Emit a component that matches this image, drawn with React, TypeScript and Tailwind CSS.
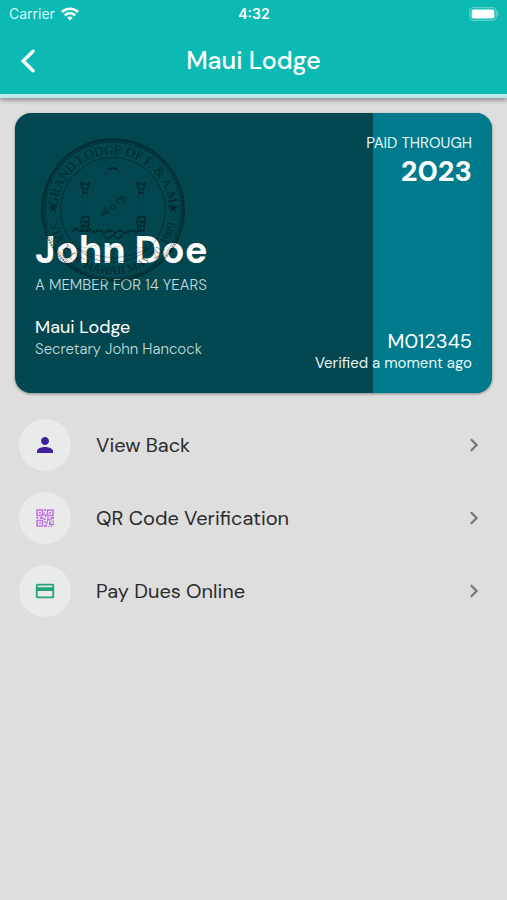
import { MdCreditCard, MdPerson } from "react-icons/md";
import type { ReactNode } from "react";

function StatusBar() {
  return (
    <div className="grid h-7 grid-cols-3 items-center pr-2 pl-[9px] font-[Inter,sans-serif] text-sm leading-5">
      <div className="flex items-center gap-1.5">
        <span className="text-[#d5f6f3]">Carrier</span>
        <svg viewBox="0 0 18 14" className="h-3.5 w-[18px]" fill="none" stroke="white" strokeWidth="2.5" aria-label="Wi-Fi">
          <path d="M.9 5a11.6 11.6 0 0 1 16.2 0" />
          <path d="M3.8 8.3a7.4 7.4 0 0 1 10.4 0" />
          <path d="M6.2 10.8a4 4 0 0 1 5.6 0L9 13.6z" fill="white" stroke="none" />
        </svg>
      </div>
      <span className="text-center font-semibold">4:32</span>
      <svg viewBox="0 0 30 14" className="h-3.5 w-[30px] justify-self-end" aria-label="Battery full">
        <rect x=".7" y=".7" width="26.6" height="12.6" rx="3.8" fill="none" stroke="#5fd2cc" strokeWidth="1.3" />
        <rect x="2.6" y="2.6" width="22.8" height="8.8" rx="2" fill="white" />
        <path d="M28.4 4.8c1.6.6 1.6 3.8 0 4.4z" fill="#6fd9d3" />
      </svg>
    </div>
  );
}

function Header() {
  return (
    <header className="relative border-b-4 border-[#b9e8e7] bg-[#0cbab3] text-white shadow-[0_2px_5px_rgba(0,0,0,0.4)]">
      <StatusBar />
      <div className="grid h-[66px] grid-cols-[56px_1fr_56px] items-center">
        <button type="button" aria-label="Back" className="flex h-12 items-center pl-5">
          <svg viewBox="0 0 16 26" className="h-6 w-4" fill="none" stroke="white" strokeWidth="3.6" strokeLinecap="round">
            <path d="M13.500 2.500 2.800 13l10.700 10.500" />
          </svg>
        </button>
        <h1 className="text-center text-[25px] leading-8 font-medium">Maui Lodge</h1>
      </div>
    </header>
  );
}

function Star({ x }: { x: number }) {
  return (
    <path
      transform={`translate(${x} 70)`}
      d="M0-5 1.2-1.6H5L2 .6 3.1 4.2 0 2-3.1 4.2-2 .6-5-1.6H-1.2z"
      fill="currentColor"
      stroke="none"
    />
  );
}

function Pillar({ x }: { x: number }) {
  return (
    <g transform={`translate(${x} 0)`}>
      <path d="M-3 55v25M3 55v25" strokeWidth=".7" opacity=".35" />
      <path d="M-4.500 44l1 5 2 2h3l2-2 1-5-2.500 3-2-2-2 2z" strokeWidth="1.200" />
      <path d="M-2 51v4h4v-4M-3 55h6" />
      <path d="M-3 79h6l1 3-1 11h-6l-1-11zM-3 84h6M-3 88h6" strokeWidth="1.300" />
      <path d="M-2 80l4 4-4 4 4 4" strokeWidth=".8" />
    </g>
  );
}

function Seal() {
  return (
    <svg
      viewBox="0 0 144 144"
      className="pointer-events-none absolute top-[25px] left-[26px] size-36 text-black opacity-45"
      fill="none"
      stroke="currentColor"
      aria-label="Lodge seal"
    >
      <defs>
        <path id="seal-top" d="M16 72a56 56 0 0 1 112 0" />
        <path id="seal-bottom" d="M7.500 72a64.500 64.500 0 0 0 129 0" />
      </defs>
      <circle cx="72" cy="72" r="70.500" strokeWidth="2.600" strokeDasharray="2 .7" />
      <circle cx="72" cy="72" r="68" strokeWidth=".7" />
      <circle cx="72" cy="72" r="52.500" strokeWidth=".8" />
      <g fill="currentColor" stroke="none" fontFamily="Liberation Serif, serif" fontSize="13">
        <text>
          <textPath href="#seal-top" startOffset="50%" textAnchor="middle">GRAND LODGE OF F. &amp; A.M.</textPath>
        </text>
        <text fontSize="12">
          <textPath href="#seal-bottom" startOffset="50%" textAnchor="middle">STATE OF HAWAII MAY 20, 1989</textPath>
        </text>
      </g>
      <Star x={12} />
      <Star x={132} />
      <Pillar x={44} />
      <Pillar x={100} />
      <path d="M67 32q5-4 10 0" strokeWidth="1.800" />
      <path d="M62 35h6M77 35h6M69 35l2-2" strokeWidth=".7" opacity=".4" />
      <g strokeWidth="1">
        <path d="M61 77l4-8 3 6zM63 75l3-2" />
        <circle cx="72" cy="69" r="2.300" />
        <path d="M75 62l3 5M79 58l5 2-1 4M77 62l4-2" />
      </g>
      <path d="M32 93l3-3 3 3h4M48 91l5 3 5-2 5 3 6-3 5 3 5-3 5 3 6-3 5 2 5-2" strokeWidth="2.200" strokeDasharray="3 1" />
      <path d="M62 97l5 4 5-4 5 4 5-4" strokeWidth="1.200" />
      <path d="M36 110q14 8 36 10 22-2 36-10" strokeWidth=".7" />
      <path d="M34 108l12 2 11-4 15 4 15-4 11 4 12-2" strokeWidth=".6" opacity=".7" />
    </svg>
  );
}

function MembershipCard() {
  return (
    <section className="relative grid h-[280px] grid-cols-[3fr_1fr] overflow-hidden rounded-2xl bg-[#034750] shadow-[0_1px_3px_rgba(0,0,0,0.4)]">
      <div className="col-start-2 row-start-1 bg-[#007b8d]" />
      <div className="col-span-2 col-start-1 row-start-1 flex justify-between px-5 py-5 text-white">
        <div className="flex flex-col justify-end pb-3.5">
          <h2 className="text-[38px] leading-12 font-bold">John Doe</h2>
          <p className="mt-px text-[15px] leading-5 font-light text-[#c0dadd]">A MEMBER FOR 14 YEARS</p>
          <p className="mt-5 text-lg leading-6">Maui Lodge</p>
          <p className="text-[15px] leading-5 font-light text-[#c0dadd]">Secretary John Hancock</p>
        </div>
        <div className="flex flex-col justify-between text-right">
          <div>
            <p className="text-[15px] leading-5 text-[#e4f6f8]">PAID THROUGH</p>
            <p className="text-[29px] leading-9 font-bold">2023</p>
          </div>
          <div>
            <p className="text-xl leading-6">M012345</p>
            <p className="text-[15px] leading-5 text-[#e4f6f8]">Verified a moment ago</p>
          </div>
        </div>
      </div>
      <Seal />
    </section>
  );
}

function QrIcon() {
  return (
    <svg viewBox="0 0 18 18" className="size-[18px]" fill="none" stroke="#c374e2" strokeWidth="1.6" aria-hidden="true">
      <path d="M1 1h5.500v5.500H1zM11.500 1H17v5.500h-5.500zM1 11.500h5.500V17H1z" />
      <path
        fill="#c374e2"
        stroke="none"
        d="M3 3h1.8v1.8H3zM13.3 3h1.8v1.8h-1.8zM3 13.3h1.8v1.8H3zM8 0h2v2H8zM7.6 3.5h1.3v3H7.6zM9 5.5h1.5v2.6H9zM0 8h2.5v1.5H0zM4 8h3v2H4zM7.5 9h2v2h-2zM11 8h2v1.5h-2zM14.5 8H18v2h-2v1.5h-1.5zM11 10h3v1.5h-2v2h-1zM8 12h2v1.5H8zM9.5 13.5h2v2h-2zM8 16h3v2H8zM13 12.5h2v2h3V16h-2v2h-1.5v-2H13zM16.5 11.5H18v2h-1.5zM12 17h1.5v1H12z"
      />
    </svg>
  );
}

function MenuRow({ icon, label }: { icon: ReactNode; label: string }) {
  return (
    <li>
      <button type="button" className="flex w-full items-center pr-6 pl-[19px] text-left">
        <span className="flex size-[52px] items-center justify-center rounded-full bg-[#e8ebea]">{icon}</span>
        <span className="ml-[25px] flex-1 text-[20px] leading-6 text-[#2b2b2b]">{label}</span>
        <svg viewBox="0 0 10 16" className="mr-1 h-3.5 w-2.5" fill="none" stroke="#777777" strokeWidth="2.6" aria-hidden="true">
          <path d="M1.4 1.5 8 8l-6.600 6.500" />
        </svg>
      </button>
    </li>
  );
}

export default function App() {
  return (
    <div className="min-h-screen bg-[#dedede] font-['DM_Sans',Inter,sans-serif]">
      <Header />
      <main className="pt-[15px]">
        <div className="px-[15px]">
          <MembershipCard />
        </div>
        <ul className="mt-[26px] flex flex-col gap-[21px]">
          <MenuRow label="View Back" icon={<MdPerson size={24} color="#42209b" />} />
          <MenuRow label="QR Code Verification" icon={<QrIcon />} />
          <MenuRow label="Pay Dues Online" icon={<MdCreditCard size={22} color="#24a477" />} />
        </ul>
      </main>
    </div>
  );
}
